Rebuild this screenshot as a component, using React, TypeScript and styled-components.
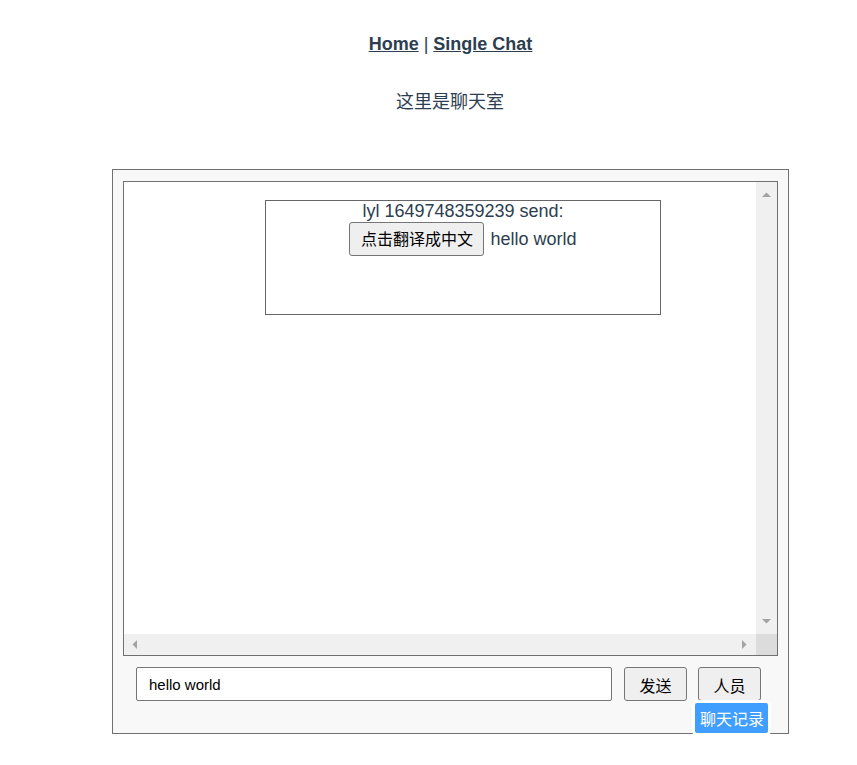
import React from "react";
import styled, { createGlobalStyle } from "styled-components";

const GlobalStyle = createGlobalStyle`
  body {
    margin: 8px;
    font-family: "Liberation Sans", "Noto Sans CJK SC", Arial, sans-serif;
    color: #2c3e50;
    background: #ffffff;
  }
`;

const Page = styled.div`
  display: flex;
  flex-direction: column;
  align-items: stretch;
`;

const Nav = styled.nav`
  padding: 26px 0 0 44px;
  text-align: center;
  font-size: 18px;
  line-height: 21px;
  color: #2c3e50;
`;

const NavLink = styled.a`
  font-weight: bold;
  color: #2c3e50;
  text-decoration: underline;
`;

const Title = styled.div`
  margin-top: 35px;
  padding-left: 43px;
  text-align: center;
  font-size: 18px;
  line-height: 24px;
  color: #2c3e50;
`;

const ChatPanel = styled.div`
  position: relative;
  box-sizing: border-box;
  width: 677px;
  height: 565px;
  margin: 55px 0 0 104px;
  padding: 11px 10px 0;
  border: 1px solid #707070;
  background: #f8f8f8;
`;

const ChatFrame = styled.div`
  box-sizing: border-box;
  height: 475px;
  border: 1px solid #707070;
  background: #ffffff;
  display: grid;
  grid-template-columns: 1fr 21px;
  grid-template-rows: 1fr 21px;
`;

const MessageArea = styled.div`
  overflow: hidden;
  padding: 18px 0 0 141px;
`;

const MessageCard = styled.div`
  box-sizing: border-box;
  width: 396px;
  height: 115px;
  border: 1px solid #666666;
  text-align: center;
  font-size: 18px;
  line-height: 21px;
  color: #2c3e50;
`;

const MessageLine = styled.div``;

const TranslateButton = styled.button`
  box-sizing: border-box;
  height: 34px;
  width: 135px;
  padding: 7px 0 5px;
  border: 1px solid #767676;
  border-radius: 3px;
  background: #efefef;
  color: #000000;
  font-family: "Liberation Sans", "Noto Sans CJK SC", sans-serif;
  font-size: 16px;
  line-height: 20px;
  vertical-align: baseline;
  margin-right: 6px;
`;

const VScrollbar = styled.div`
  background: #f0f0f0;
  display: flex;
  flex-direction: column;
  justify-content: space-between;
`;

const HScrollbar = styled.div`
  background: #f0f0f0;
  display: flex;
  justify-content: space-between;
`;

const ScrollCorner = styled.div`
  background: #dcdcdc;
`;

const ScrollButton = styled.div<{ $pad?: string }>`
  width: 21px;
  height: 21px;
  box-sizing: border-box;
  display: flex;
  align-items: center;
  justify-content: center;
  padding: ${(p) => p.$pad || "0"};
`;

const InputRow = styled.div`
  display: flex;
  align-items: center;
  gap: 11px;
  margin-top: 11px;
  padding: 0 17px 0 13px;
`;

const MessageInput = styled.input`
  flex: 1;
  min-width: 0;
  box-sizing: border-box;
  height: 34px;
  margin-right: 1px;
  padding: 0 12px;
  border: 1px solid #767676;
  border-radius: 2px;
  background: #ffffff;
  color: #000000;
  font-family: "Liberation Sans", Arial, sans-serif;
  font-size: 15px;
  outline: none;
`;

const ActionButton = styled.button`
  box-sizing: border-box;
  width: 63px;
  height: 34px;
  padding: 1px 0 0;
  border: 1px solid #767676;
  border-radius: 3px;
  background: #efefef;
  color: #000000;
  font-family: "Noto Sans CJK SC", sans-serif;
  font-size: 16px;
  line-height: 20px;
`;

const HistoryBadge = styled.div`
  position: absolute;
  top: 530px;
  right: 17px;
  border: 3px solid #ffffff;
  border-radius: 5px;
  background: #409eff;
  color: #ffffff;
  font-family: "Noto Sans CJK SC", sans-serif;
  font-size: 16px;
  line-height: 22px;
  padding: 4px 4px 4px 5px;
`;

type Dir = "up" | "down" | "left" | "right";

const Arrow: React.FC<{ dir: Dir }> = ({ dir }) => {
  const vertical = dir === "up" || dir === "down";
  const w = vertical ? 9 : 5;
  const h = vertical ? 5 : 9;
  const pts: Record<Dir, string> = {
    up: "0,5 9,5 4.5,0.5",
    down: "0,0 9,0 4.5,4.5",
    left: "5,0 5,9 0.5,4.5",
    right: "0,0 0,9 4.5,4.5",
  };
  return (
    <svg width={w} height={h} viewBox={`0 0 ${w} ${h}`}>
      <polygon points={pts[dir]} fill="#a3a3a3" />
    </svg>
  );
};

export default function App() {
  return (
    <>
      <GlobalStyle />
      <Page>
        <Nav>
          <NavLink href="#/">Home</NavLink> | <NavLink href="#/single">Single Chat</NavLink>
        </Nav>
        <Title>这里是聊天室</Title>
        <ChatPanel>
          <ChatFrame>
            <MessageArea>
              <MessageCard>
                <MessageLine>lyl 1649748359239 send:</MessageLine>
                <MessageLine>
                  <TranslateButton>点击翻译成中文</TranslateButton>hello world
                </MessageLine>
              </MessageCard>
            </MessageArea>
            <VScrollbar>
              <ScrollButton $pad="3px 0 0">
                <Arrow dir="up" />
              </ScrollButton>
              <ScrollButton $pad="0 0 4px">
                <Arrow dir="down" />
              </ScrollButton>
            </VScrollbar>
            <HScrollbar>
              <ScrollButton>
                <Arrow dir="left" />
              </ScrollButton>
              <ScrollButton $pad="0 2px 0 0">
                <Arrow dir="right" />
              </ScrollButton>
            </HScrollbar>
            <ScrollCorner />
          </ChatFrame>
          <InputRow>
            <MessageInput defaultValue="hello world" />
            <ActionButton>发送</ActionButton>
            <ActionButton>人员</ActionButton>
          </InputRow>
          <HistoryBadge>聊天记录</HistoryBadge>
        </ChatPanel>
      </Page>
    </>
  );
}
